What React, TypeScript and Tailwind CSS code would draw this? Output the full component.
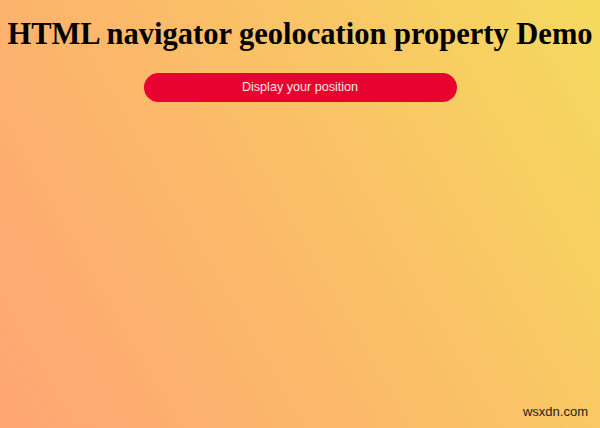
export default function App() {
  return (
    <div className="relative h-[428px] w-[600px] overflow-hidden bg-[linear-gradient(60deg,#fea574,#fbbd68_50%,#f5da5e)]">
      <h1 className="pt-[16px] text-center text-[30.5px] font-bold leading-[36px] text-black [font-family:'Liberation_Serif',serif]">
        HTML navigator geolocation property Demo
      </h1>
      <div className="mt-[21px] flex justify-center">
        <button className="h-[29px] w-[313px] rounded-full bg-[#e8022f] text-[12.6px] text-[#fde6e6] [font-family:'Liberation_Sans',Arial,sans-serif]">
          Display your position
        </button>
      </div>
      <div className="absolute bottom-[7px] right-[12px] text-[13px] text-[#222] [font-family:'Liberation_Sans',Arial,sans-serif]">
        wsxdn.com
      </div>
    </div>
  );
}
